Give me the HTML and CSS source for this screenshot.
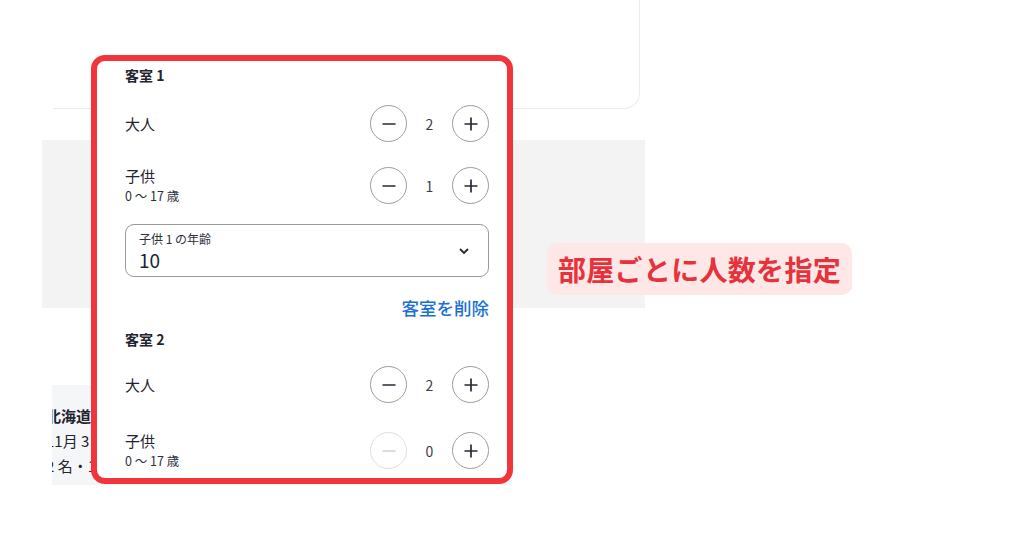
FILE: index.html
```html
<!DOCTYPE html>
<html lang="ja">
<head>
    <meta charset="UTF-8">
    <meta name="viewport" content="width=device-width, initial-scale=1.0">
    <title>客室と人数</title>
    <link rel="stylesheet" href="styles.css">
</head>
<body>
    <div class="page">
        <!-- faded search page behind the popover -->
        <div class="backdrop">
            <div class="search-card"></div>
            <div class="hero"></div>
            <div class="trip-card">
                <div class="trip-title">北海道旅行</div>
                <div class="trip-line">11月 3日</div>
                <div class="trip-line">2 名・1 室</div>
            </div>
        </div>

        <div class="rooms-panel">
            <div class="room-title">客室 1</div>
            <div class="guest-row row-adult">
                <div class="guest-label">大人</div>
                <div class="stepper">
                    <button class="step-btn"><svg width="16" height="16" viewBox="0 0 16 16"><path d="M1.5 8h13"/></svg></button>
                    <span class="step-value">2</span>
                    <button class="step-btn"><svg width="16" height="16" viewBox="0 0 16 16"><path d="M1.5 8h13M8 1.5v13"/></svg></button>
                </div>
            </div>
            <div class="guest-row row-child">
                <div class="guest-label">子供<span class="guest-sub">0 ～ 17 歳</span></div>
                <div class="stepper">
                    <button class="step-btn"><svg width="16" height="16" viewBox="0 0 16 16"><path d="M1.5 8h13"/></svg></button>
                    <span class="step-value">1</span>
                    <button class="step-btn"><svg width="16" height="16" viewBox="0 0 16 16"><path d="M1.5 8h13M8 1.5v13"/></svg></button>
                </div>
            </div>
            <div class="age-select">
                <div class="age-text">
                    <span class="age-label">子供 1 の年齢</span>
                    <span class="age-value">10</span>
                </div>
                <svg class="chevron" width="12" height="8" viewBox="0 0 12 8"><path d="M2 2l4 4 4-4"/></svg>
            </div>
            <div class="remove-row"><a class="remove-link">客室を削除</a></div>

            <div class="room-title room-two">客室 2</div>
            <div class="guest-row row-adult-two">
                <div class="guest-label">大人</div>
                <div class="stepper">
                    <button class="step-btn"><svg width="16" height="16" viewBox="0 0 16 16"><path d="M1.5 8h13"/></svg></button>
                    <span class="step-value">2</span>
                    <button class="step-btn"><svg width="16" height="16" viewBox="0 0 16 16"><path d="M1.5 8h13M8 1.5v13"/></svg></button>
                </div>
            </div>
            <div class="guest-row row-child-two">
                <div class="guest-label">子供<span class="guest-sub">0 ～ 17 歳</span></div>
                <div class="stepper">
                    <button class="step-btn disabled"><svg width="16" height="16" viewBox="0 0 16 16"><path d="M1.5 8h13"/></svg></button>
                    <span class="step-value">0</span>
                    <button class="step-btn"><svg width="16" height="16" viewBox="0 0 16 16"><path d="M1.5 8h13M8 1.5v13"/></svg></button>
                </div>
            </div>
        </div>

        <div class="callout">部屋ごとに人数を指定</div>
    </div>
</body>
</html>
```

FILE: styles.css
```css
body {
    margin: 0;
    background-color: #fff;
    font-family: "Noto Sans CJK JP", "Noto Sans", sans-serif;
    color: #1f2430;
}
.page {
    position: relative;
    width: 1024px;
    height: 538px;
    overflow: hidden;
}

/* background page */
.backdrop {
    display: flex;
    flex-direction: column;
    align-items: flex-start;
}
.search-card {
    box-sizing: border-box;
    margin-left: 53px;
    width: 587px;
    height: 109px;
    border: 1px solid #ececec;
    border-top: none;
    border-left: none;
    border-radius: 0 0 16px 0;
    background-color: #fff;
}
.hero {
    margin-top: 31px;
    margin-left: 42px;
    width: 603px;
    height: 168px;
    background-color: #f3f3f3;
}
.trip-card {
    box-sizing: border-box;
    margin-top: 77px;
    margin-left: 52px;
    width: 460px;
    height: 100px;
    padding-top: 18px;
    overflow: hidden;
    background-color: #f5f6f8;
}
.trip-title,
.trip-line {
    margin-left: -6px;
    line-height: 25px;
    font-size: 15px;
    white-space: nowrap;
}
.trip-title {
    font-weight: 700;
}

/* rooms popover */
.rooms-panel {
    position: absolute;
    left: 91px;
    top: 55px;
    box-sizing: border-box;
    width: 422px;
    height: 429px;
    padding: 0 18px 0 28px;
    border: 6px solid #f2343b;
    border-radius: 14px;
    background-color: #fff;
    overflow: hidden;
}
.room-title {
    margin-top: 4px;
    font-size: 14px;
    font-weight: 700;
    line-height: 21px;
}
.room-two {
    margin-top: 10px;
}
.guest-row {
    display: flex;
    align-items: center;
    justify-content: space-between;
}
.row-adult { margin-top: 19px; }
.row-child { margin-top: 24px; }
.row-adult-two { margin-top: 16px; }
.row-child-two { margin-top: 28px; }
.guest-label {
    display: flex;
    flex-direction: column;
    font-size: 15px;
    line-height: 20px;
}
.guest-sub {
    font-size: 12.5px;
    line-height: 19px;
    color: #2b303b;
}
.stepper {
    display: flex;
    align-items: center;
}
.step-btn {
    box-sizing: border-box;
    display: flex;
    align-items: center;
    justify-content: center;
    width: 37px;
    height: 37px;
    padding: 0;
    border: 1px solid #9c9c9c;
    border-radius: 50%;
    background-color: #fff;
}
.step-btn svg {
    fill: none;
    stroke: #262a36;
    stroke-width: 1.7;
}
.step-btn.disabled {
    border-color: #dedede;
}
.step-btn.disabled svg {
    stroke: #d2d2d2;
}
.step-value {
    width: 45px;
    text-align: center;
    font-size: 14px;
    color: #3a3e4c;
}
.age-select {
    box-sizing: border-box;
    display: flex;
    align-items: center;
    justify-content: space-between;
    margin-top: 19px;
    height: 53px;
    padding: 0 18px 0 13px;
    border: 1px solid #9a9a9a;
    border-radius: 9px;
}
.age-text {
    display: flex;
    flex-direction: column;
}
.age-label {
    font-size: 12px;
    line-height: 18px;
    color: #2b303b;
}
.age-value {
    font-size: 19px;
    line-height: 24px;
}
.chevron {
    fill: none;
    stroke: #262a36;
    stroke-width: 1.8;
}
.remove-row {
    display: flex;
    justify-content: flex-end;
    margin-top: 20px;
}
.remove-link {
    font-size: 17.5px;
    font-weight: 500;
    line-height: 22px;
    color: #1a6fd6;
}

/* annotation */
.callout {
    position: absolute;
    left: 547px;
    top: 243px;
    box-sizing: border-box;
    width: 305px;
    height: 52px;
    padding-left: 11px;
    border-radius: 10px;
    background-color: #fde7e7;
    color: #e5323b;
    font-size: 28px;
    font-weight: 700;
    letter-spacing: 0.3px;
    line-height: 52px;
    white-space: nowrap;
}
```
